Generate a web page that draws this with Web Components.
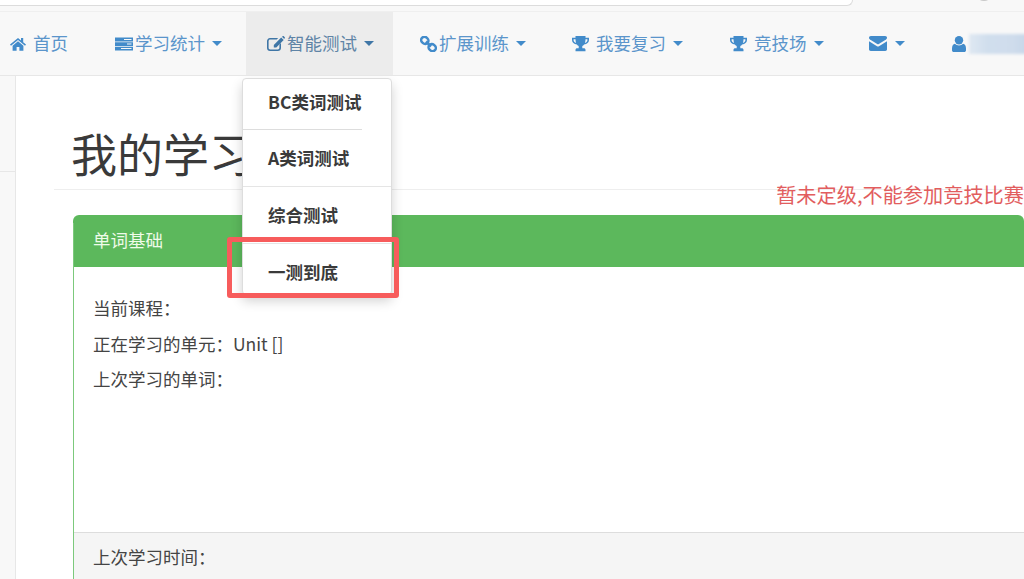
<!DOCTYPE html>
<html lang="zh"><head><meta charset="utf-8"><title>我的学习</title>
<style>
html,body{margin:0;padding:0;height:579px;overflow:hidden;background:#fff;font-family:"Noto Sans CJK SC","Noto Sans",sans-serif;color:#333}
body{display:flex;flex-direction:column}
</style></head><body>
<browser-strip></browser-strip>
<top-nav>
 <nav-item icon="home" gap="7" pl="10" pr="21" label="首页"></nav-item>
 <nav-item icon="tasks" gap="2" caret ml="5" label="学习统计"></nav-item>
 <nav-item icon="edit" gap="2" caret active ml="5" label="智能测试"></nav-item>
 <nav-item icon="link" gap="2" caret ml="6" label="扩展训练"></nav-item>
 <nav-item icon="trophy" gap="7" caret ml="6" label="我要复习"></nav-item>
 <nav-item icon="trophy" gap="7" caret ml="7" label="竞技场"></nav-item>
 <nav-item icon="mail" gap="1" caret ml="5.5"></nav-item>
 <nav-item icon="user" gap="3" ml="7" blur></nav-item>
</top-nav>
<page-body>
 <page-title>我的学习</page-title>
 <rank-note>暂未定级,不能参加竞技比赛</rank-note>
 <info-panel heading="单词基础" footer="上次学习时间：">
  <p>当前课程：</p>
  <p>正在学习的单元：Unit []</p>
  <p>上次学习的单词：</p>
 </info-panel>
 <drop-menu>
  <menu-entry short>BC类词测试</menu-entry>
  <menu-entry>A类词测试</menu-entry>
  <menu-entry>综合测试</menu-entry>
  <menu-entry last>一测到底</menu-entry>
 </drop-menu>
</page-body>
<script>
const ICONS={
 home:['0 0 16 14','<path d="M8 .9 0 7.500l1 1.200L8 2.900l7 5.800 1-1.200-2.800-2.300V1h-2.200v2.500z"/><path d="M8 4.200 2.600 8.700v5.100h4V9.900h2.800v3.900h4V8.700z"/>'],
 tasks:['0 0 18 14','<path d="M0 .5h18v4H0zM0 5.300h18v3.600H0zM0 9.700h18v3.800H0z"/><path fill="#f8f8f8" d="M9 2h7.500v1H9zM12 6.600h4.500v1H12zM6 11.100h10.500v1H6z"/>'],
 edit:['0 0 18 15','<path d="M3 2h8.200L9.700 3.600H3.200c-.9 0-1.600.7-1.600 1.600v6.600c0 .9.7 1.600 1.600 1.600h7.600c.9 0 1.600-.7 1.600-1.600V8.600L14 7v4.900c0 1.700-1.400 3.100-3.100 3.100H3c-1.700 0-3-1.400-3-3.100V5.100C0 3.400 1.300 2 3 2z"/><path d="M14.200 1.500 16.700 4 9.300 11.400H6.800V8.900zM15 .7 16 .1c.3-.2.600-.1.800.1l1 1c.2.200.2.500 0 .8l-.6 1z"/>'],
 link:['0 0 17 16','<g fill="none" stroke="currentColor" stroke-width="2.500"><rect x="1.100" y="1.100" width="7.500" height="6.500" rx="3.200" transform="rotate(42 4.800 4.300)"/><rect x="8.400" y="8.400" width="7.500" height="6.500" rx="3.200" transform="rotate(42 12.200 11.700)"/><path d="M6 5.500l5 5"/></g>'],
 trophy:['0 0 17 16','<path d="M3.500 0h10v1.700H17v2.400c0 2.400-2.100 4.300-4.900 4.500-.5.700-1.100 1.200-1.800 1.500v2.200h1.500c1 0 1.700.6 1.700 1.500v1.500H3.500v-1.500c0-.9.700-1.500 1.700-1.500h1.500v-2.200c-.7-.3-1.300-.8-1.800-1.500C2.100 8.400 0 6.500 0 4.100V1.700h3.500zM1.600 3.200v1c0 1.200.9 2.200 2.500 2.700-.4-1-.6-2.300-.6-3.700zm13.800 0h-1.900c0 1.400-.2 2.700-.6 3.700 1.600-.5 2.500-1.500 2.500-2.700z"/>'],
 mail:['0 0 18 15','<path d="M1.800 0h14.400C17.200 0 18 .8 18 1.800c0 .7-.4 1.300-1 1.700L9.800 8c-.5.300-1.100.3-1.600 0L1 3.500C.4 3.100 0 2.500 0 1.800 0 .8.800 0 1.800 0z"/><path d="M0 5.300 8 10.200c.6.400 1.400.4 2 0l8-4.900v8C18 14.200 17.200 15 16.300 15H1.700C.8 15 0 14.200 0 13.300z"/>'],
 user:['0 0 14 16','<circle cx="7" cy="4.200" r="4.200"/><path d="M3 7.700C4.100 8.800 5.500 9.400 7 9.400s2.900-.6 4-1.700c2 .3 3 2 3 4.900v1.600c0 1-.8 1.800-1.800 1.800H1.800C.8 16 0 15.200 0 14.200v-1.600c0-2.900 1-4.600 3-4.900z"/>']
};
function mk(name,css,html,init){
 customElements.define(name,class extends HTMLElement{
  constructor(){super();this.attachShadow({mode:'open'}).innerHTML='<style>'+css+'</style>'+html}
  connectedCallback(){init&&init.call(this,this.shadowRoot)}
 });
}
mk('browser-strip',`:host{display:block;height:12px;background:#f8f8f8;position:relative;flex:none}
 .bar{height:5px;width:852px;background:#fff;border-bottom:1px solid #dcdcdc;border-right:1px solid #dcdcdc;border-bottom-right-radius:10px;box-sizing:content-box}
 .dot{position:absolute;left:978px;top:-6px;width:12px;height:7px;border-radius:50%;background:#c8c8c8}
 .line{position:absolute;left:0;right:0;bottom:0;height:1px;background:#efefef}`,
 '<div class="bar"></div><div class="dot"></div><div class="line"></div>');
mk('top-nav',`:host{display:flex;flex:none;height:63px;background:#f8f8f8;border-bottom:1px solid #e7e7e7;overflow:hidden}`,'<slot></slot>');
mk('nav-item',`:host{display:flex;align-items:center;height:63px;padding:0 19px 0 21px;color:#428bca;font-size:17.5px;box-sizing:border-box;flex:none;white-space:nowrap}
 :host([active]){background:#ececec;color:#3f76a6}
 svg{fill:currentColor;display:block;flex:none}
 .c{width:0;height:0;border:5px solid transparent;border-top:5.5px solid currentColor;border-bottom:0;margin-left:7px;flex:none}
 .l{line-height:24px;color:#5b95cb;padding-bottom:2px}
 :host([active]) .l{color:#5f84a6}
 .b{width:62px;height:20px;background:linear-gradient(90deg,#dfe8f2,#d0deed 30%,#cfdcec 70%,#c4d5e8);filter:blur(1.5px)}`,
 '<span id="i"></span><span class="l" id="t"></span><span id="x"></span>',
 function(r){
  const [vb,p]=ICONS[this.getAttribute('icon')];
  const [,,w,h]=vb.split(' ').map(Number);
  r.getElementById('i').innerHTML=`<svg viewBox="${vb}" width="${w}" height="${h}" style="margin-right:${this.getAttribute('gap')||0}px">${p}</svg>`;
  r.getElementById('t').textContent=this.getAttribute('label')||'';
  if(this.hasAttribute('caret')){r.getElementById('x').className='c'}
  if(this.hasAttribute('blur')){r.getElementById('x').className='b'}
  if(this.getAttribute('pl'))this.style.paddingLeft=this.getAttribute('pl')+'px';
  if(this.getAttribute('pr'))this.style.paddingRight=this.getAttribute('pr')+'px';
  if(this.getAttribute('ml'))this.style.marginLeft=this.getAttribute('ml')+'px';
 });
mk('page-body',`:host{display:block;flex:1;position:relative;padding:0 0 0 54px;overflow:hidden;background:#fff}
 .side{position:absolute;left:0;top:0;bottom:0;width:15px;background:#f8f8f8;border-right:1px solid #e7e7e7}
 .side i{display:block;height:95px;border-bottom:1px solid #e7e7e7}`,
 '<div class="side"><i></i></div><slot></slot>');
mk('page-title',`:host{display:block;height:114px;box-sizing:border-box;padding:48px 0 0 17px;border-bottom:1px solid #eee;font-size:46px;line-height:56px;color:#3a3a3a}`,'<slot></slot>');
mk('rank-note',`:host{position:absolute;right:0;top:106px;font-size:20.2px;line-height:26px;color:#e25d5e;white-space:nowrap}`,'<slot></slot>');
mk('info-panel',`:host{display:block;margin:25px 0 0 19px;background:#fff;border-radius:6px 6px 0 0;font-size:17.5px;color:#444;position:relative}
 .edge{position:absolute;left:0;top:8px;bottom:0;width:1px;background:#7cc97c}
 .h{height:52px;background:#5cb85c;border-radius:6px 6px 0 0;color:#effbe9;padding:0 20px 3px;box-sizing:border-box;display:flex;align-items:center}
 .b{height:265px;padding:28px 20px 0;box-sizing:border-box}
 .f{height:60px;background:#f5f5f5;border-top:1px solid #ddd;padding:9px 20px;box-sizing:border-box;line-height:30px}
 ::slotted(p){margin:0 0 9.500px;line-height:26px;height:26px}`,
 '<div class="h" id="h"></div><div class="b"><slot></slot></div><div class="f" id="f"></div><div class="edge"></div>',
 function(r){r.getElementById('h').textContent=this.getAttribute('heading');r.getElementById('f').textContent=this.getAttribute('footer')});
mk('drop-menu',`:host{position:absolute;left:242px;top:2px;width:150px;box-sizing:border-box;background:#fff;border:1px solid #ddd;border-radius:4px;box-shadow:0 6px 12px rgba(0,0,0,.18);display:block}
 .box{position:absolute;left:-16px;top:158px;width:172px;height:61px;box-sizing:border-box;border:5px solid #f75c5c;border-radius:3px;pointer-events:none}`,
 '<slot></slot><div class="box"></div>');
mk('menu-entry',`:host{display:block;height:57px;box-sizing:border-box;padding:0 0 0 25px;font-size:17.5px;font-weight:700;color:#3a3a3a;line-height:56px;border-bottom:1px solid #e5e5e5;white-space:nowrap;position:relative}
 :host([short]){border-bottom:0;height:51px;line-height:45px}
 :host([short])::after{content:"";position:absolute;left:0;bottom:0;width:119px;height:1px;background:#ddd}
 :host([last]){border-bottom:0;height:50px}`,'<slot></slot>');
</script>
</body></html>
